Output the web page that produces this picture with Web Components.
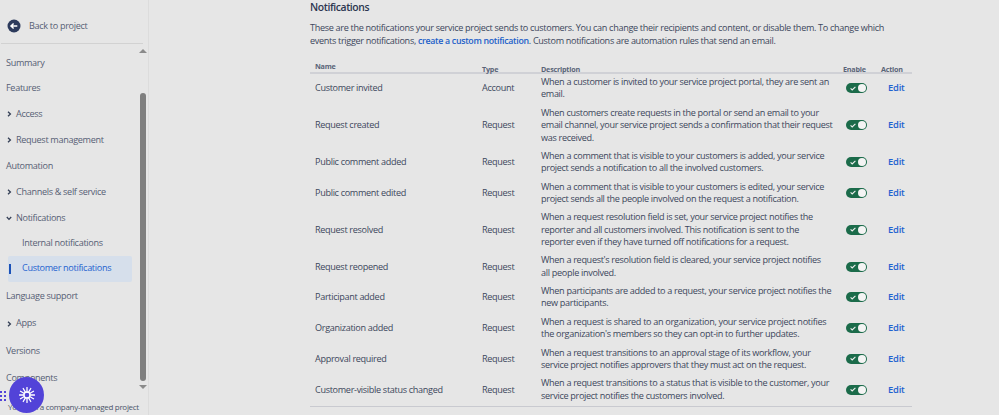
<!DOCTYPE html>
<html lang="en"><head><meta charset="utf-8"><title>Customer notifications</title>
<style>
html,body{margin:0;height:100%;background:#e6e6e6;overflow:hidden}
body{font:9.1px/12.3px "Open Sans","Noto Sans",sans-serif;letter-spacing:-.32px;color:#3c465c}
</style></head><body>
<app-shell>
<side-bar slot="side">
 <nav-item slot="nav" h="25">Summary</nav-item>
 <nav-item slot="nav" h="25">Features</nav-item>
 <nav-item slot="nav" h="27" arrow="right">Access</nav-item>
 <nav-item slot="nav" h="25" arrow="right">Request management</nav-item>
 <nav-item slot="nav" h="27">Automation</nav-item>
 <nav-item slot="nav" h="25" arrow="right">Channels &amp; self service</nav-item>
 <nav-item slot="nav" h="27" arrow="down">Notifications</nav-item>
 <nav-item slot="nav" h="24" sub>Internal notifications</nav-item>
 <nav-item slot="nav" h="26" sub active>Customer notifications</nav-item>
 <nav-item slot="nav" h="29">Language support</nav-item>
 <nav-item slot="nav" h="26" arrow="right">Apps</nav-item>
 <nav-item slot="nav" h="30">Versions</nav-item>
 <nav-item slot="nav" h="23">Components</nav-item>
</side-bar>
<notif-panel slot="main">
 <notif-row name="Customer invited" type="Account">When a customer is invited to your service project portal, they are sent an<br>email.</notif-row>
 <notif-row name="Request created" type="Request">When customers create requests in the portal or send an email to your<br>email channel, your service project sends a confirmation that their request<br>was received.</notif-row>
 <notif-row name="Public comment added" type="Request">When a comment that is visible to your customers is added, your service<br>project sends a notification to all the involved customers.</notif-row>
 <notif-row name="Public comment edited" type="Request">When a comment that is visible to your customers is edited, your service<br>project sends all the people involved on the request a notification.</notif-row>
 <notif-row name="Request resolved" type="Request">When a request resolution field is set, your service project notifies the<br>reporter and all customers involved. This notification is sent to the<br>reporter even if they have turned off notifications for a request.</notif-row>
 <notif-row name="Request reopened" type="Request">When a request's resolution field is cleared, your service project notifies<br>all people involved.</notif-row>
 <notif-row name="Participant added" type="Request">When participants are added to a request, your service project notifies the<br>new participants.</notif-row>
 <notif-row name="Organization added" type="Request">When a request is shared to an organization, your service project notifies<br>the organization's members so they can opt-in to further updates.</notif-row>
 <notif-row name="Approval required" type="Request">When a request transitions to an approval stage of its workflow, your<br>service project notifies approvers that they must act on the request.</notif-row>
 <notif-row name="Customer-visible status changed" type="Request">When a request transitions to a status that is visible to the customer, your<br>service project notifies the customers involved.</notif-row>
</notif-panel>
</app-shell>
<script>
function def(name, html, cls){
  const t=document.createElement('template');t.innerHTML=html;
  customElements.define(name,class extends HTMLElement{
    constructor(){super();this.attachShadow({mode:'open'}).appendChild(t.content.cloneNode(true));}
    connectedCallback(){cls&&cls.call(this,this.shadowRoot);}
  });
}
def('app-shell',`<style>:host{display:grid;grid-template-columns:149px 1fr;height:415px;overflow:hidden}
.m{padding-left:161px;min-width:0}</style><slot name="side"></slot><div class="m"><slot name="main"></slot></div>`);

def('side-bar',`<style>
:host{display:flex;flex-direction:column;height:415px;border-right:1px solid #dcdcdc;box-sizing:border-box;position:relative;overflow:hidden;color:#566075}
.back{display:flex;align-items:center;gap:8px;height:44px;margin:0 5px 0 1px;padding:9px 0 0 6px;box-sizing:border-box;border-bottom:1px solid #d2d2d2;flex:none}
.body{display:flex;flex:1;min-height:0;padding-top:6.5px}
nav{flex:1;display:flex;flex-direction:column;min-width:0}
.sb{width:7px;margin:0 2px 0 0;flex:none;display:flex;flex-direction:column;align-items:center;height:345px}
.sb i{display:block;width:6px;border-radius:3px;background:#7f7f7f;margin-top:40px;height:288px}
.ar{width:0;height:0;border-left:4px solid transparent;border-right:4px solid transparent;flex:none}
.up{border-bottom:4px solid #8a8a8a;margin-top:-2px}
.dn{border-top:4px solid #8a8a8a;margin-top:4px}
.foot{position:absolute;left:8px;bottom:2px;white-space:nowrap;font-size:8px;letter-spacing:-.3px;color:#4b556a}
.fab{position:absolute;left:9px;top:377px;width:35px;height:36px;border-radius:50%;background:#5243d8;display:grid;place-items:center}
.dots{position:absolute;left:0;top:391px;width:6px;height:10px;display:grid;grid-template-columns:2px 2px;grid-auto-rows:2px;gap:2px}
.dots b{background:#5243d8;display:block}
</style>
<div class="back"><svg width="14" height="14" viewBox="0 0 14 14"><circle cx="7" cy="7" r="6.5" fill="#2c3a5c"/><path d="M10.3 7H4.2M6.6 4.5 4 7l2.6 2.5" fill="none" stroke="#fff" stroke-width="1.5"/></svg><span>Back to project</span></div>
<div class="body"><nav><slot name="nav"></slot></nav><div class="sb"><span class="ar up"></span><i></i><span class="ar dn"></span></div></div>
<div class="foot">You're in a company-managed project</div>
<div class="dots"><b></b><b></b><b></b><b></b><b></b><b></b></div>
<div class="fab"><svg width="16" height="16" viewBox="0 0 16 16" fill="none" stroke="#fff" stroke-width="1.3" stroke-linecap="round"><circle cx="8" cy="8" r="3"/><path d="M11 8h4.500M10.600 9.500l3.900 2.250M9.500 10.600l2.250 3.900M8 11v4.500M6.500 10.600l-2.250 3.900M5.400 9.500l-3.900 2.250M5 8H.5M5.400 6.500 1.500 4.250M6.500 5.400 4.250 1.500M8 5V.5M9.500 5.400l2.250-3.900M10.600 6.500l3.900-2.250"/></svg></div>`);

def('nav-item',`<style>
:host{display:flex;align-items:center;box-sizing:border-box;white-space:nowrap;padding-left:6px;flex:none}
:host([sub]){padding-left:8px}
.lab{display:flex;align-items:center;height:100%;flex:1;box-sizing:border-box;border-radius:2px;position:relative}
:host([arrow]) .lab{padding-left:10px}
:host([sub]) .lab{padding-left:14px;margin-right:7px}
:host([active]) .lab{background:#d6dfeb;color:#1f63d0;height:26px}
:host([active]) .lab::before{content:"";position:absolute;left:.5px;top:8px;width:2px;height:10px;background:#1b52b8}
svg{position:absolute;left:0;top:50%;margin-top:-3px}
</style><div class="lab"><svg width="6" height="6" viewBox="0 0 6 6" fill="none" stroke="#333e55" stroke-width="1.3" hidden><path id="p"/></svg><slot></slot></div>`,
function(r){this.style.height=this.getAttribute('h')+'px';const a=this.getAttribute('arrow');if(a){const s=r.querySelector('svg');s.hidden=false;s.querySelector('path').setAttribute('d',a==='right'?'M2 .8 4.400 3 2 5.200':'M.8 2 3 4.400 5.200 2');}});

def('notif-panel',`<style>
:host{display:block;width:602px}
h2{font:600 10.4px/14px "Open Sans","Noto Sans",sans-serif;letter-spacing:-.4px;margin:0;color:#2c3650}
p{margin:7px 0 0;white-space:nowrap;line-height:13px}
a{color:#1c5fc9;font-weight:600;font-size:8.8px;letter-spacing:-.3px;text-decoration:none}
.head{display:grid;grid-template-columns:167px 59px 302px 38px 1fr;padding:8px 0 0 5px;height:21px;box-sizing:border-box;font:700 7.2px/10px "Open Sans","Noto Sans",sans-serif;letter-spacing:-.22px;color:#5a6478;border-bottom:2px solid #d0d1d6;align-items:end;margin-top:5px}
.head span{padding-bottom:1px}
.head .n{padding-bottom:4px}
.tb{border-bottom:1px solid #c9cad0;margin-top:-1px;padding:.2px 0 .8px}
</style>
<h2>Notifications</h2>
<p>These are the notifications your service project sends to customers. You can change their recipients and content, or disable them. To change which<br>events trigger notifications, <a>create a custom notification</a>. Custom notifications are automation rules that send an email.</p>
<div class="head"><span class="n">Name</span><span>Type</span><span>Description</span><span>Enable</span><span>Action</span></div>
<div class="tb"><slot></slot></div>`);

def('notif-row',`<style>
:host{display:grid;grid-template-columns:167px 59px 302px 45px 1fr;padding:3px 0 3.15px 5px;align-items:center}
.d{white-space:nowrap}
.sw{display:flex;align-items:center;width:21px;height:10px;border-radius:5px;background:#1b6b4a;margin-left:3px;position:relative}
.sw svg{position:absolute;left:4px;top:2.500px}
.sw i{position:absolute;right:1.500px;top:1px;width:8px;height:8px;border-radius:50%;background:#f4f4f4}
.e{color:#1f63d0;font-weight:600;font-size:9.4px;letter-spacing:-.2px}
</style><span id="n"></span><span id="t"></span><div class="d"><slot></slot></div>
<div class="sw"><svg width="6" height="5" viewBox="0 0 6 5" fill="none" stroke="#f0f0f0" stroke-width="1.100"><path d="M.6 2.400 2.200 4 5.400.8"/></svg><i></i></div><span class="e">Edit</span>`,
function(r){r.getElementById('n').textContent=this.getAttribute('name');r.getElementById('t').textContent=this.getAttribute('type');});
</script>
</body></html>
